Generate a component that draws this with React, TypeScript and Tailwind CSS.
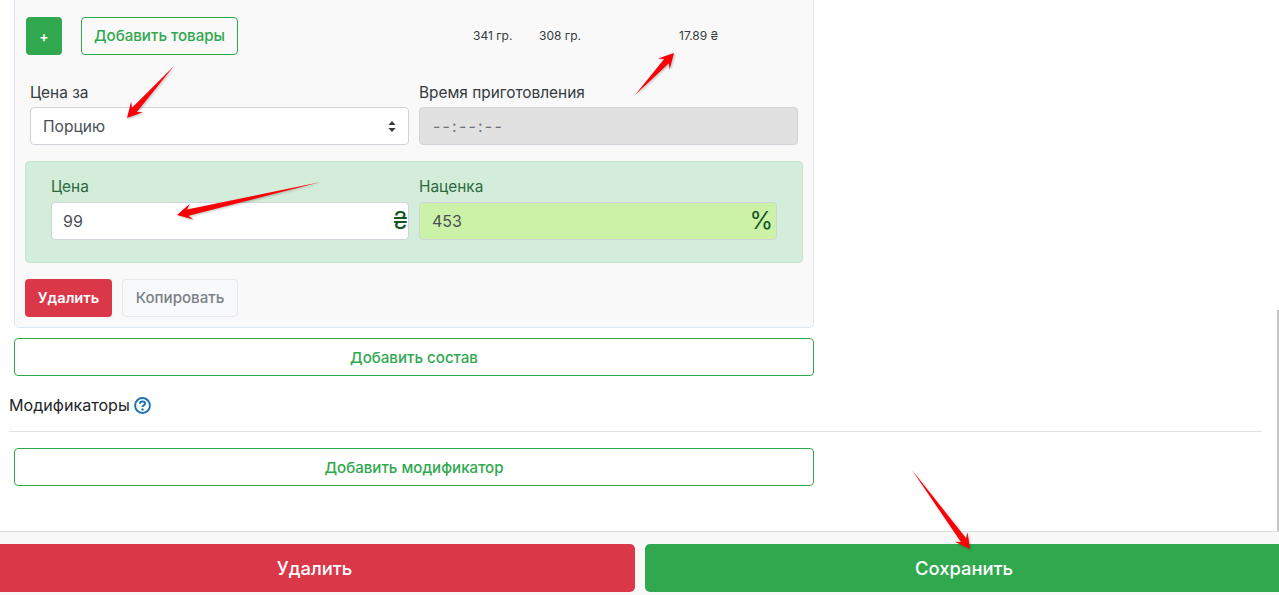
import React from "react";

function Arrow({ x1, y1, x2, y2 }: { x1: number; y1: number; x2: number; y2: number }) {
    // tapered annotation arrow drawn from tail (x1,y1) to tip (x2,y2)
    const len = Math.hypot(x2 - x1, y2 - y1);
    const ux = (x2 - x1) / len;
    const uy = (y2 - y1) / len;
    const nx = -uy;
    const ny = ux;
    const bx = x2 - ux * 15;
    const by = y2 - uy * 15;
    const nbx = x2 - ux * 11;
    const nby = y2 - uy * 11;
    const pts = [
        [x1, y1],
        [nbx + nx * 3.2, nby + ny * 3.2],
        [bx + nx * 8, by + ny * 8],
        [x2, y2],
        [bx - nx * 8, by - ny * 8],
        [nbx - nx * 3.2, nby - ny * 3.2],
    ]
        .map((p) => p.join(","))
        .join(" ");
    return <polygon points={pts} fill="#fb0007" />;
}

function Field({ label, children }: { label: string; children: React.ReactNode }) {
    return (
        <div className="w-[358px]">
            <div className="h-[24px] text-[15.4px] leading-[26px] mb-[4px] text-[#2b6a3c]">{label}</div>
            {children}
        </div>
    );
}

export default function App() {
    return (
        <div className="relative w-[1279px] h-[595px] overflow-hidden bg-white flex flex-col text-[#212529] font-['Inter',sans-serif]">
            <div className="flex-1 min-h-0 pl-[9px] pr-[17px]">
                <div className="ml-[5px] w-[800px] h-[328px] bg-[#f9f9f9] border border-t-0 border-[#dee6f2] rounded-b-[5px] pl-[10px] pr-[10px] flex flex-col">
                    <div className="flex items-center pt-[17px] pl-[1px]">
                        <button className="w-[36px] h-[38px] rounded-[4px] bg-[#30a84e] text-white text-[14px] font-semibold">+</button>
                        <button className="ml-[19px] w-[157px] h-[38px] rounded-[4px] border border-[#30a84e] text-[#30a84e] text-[15.1px] font-medium">Добавить товары</button>
                        <span className="ml-[235px] w-[66px] text-[12px] text-[#343a40]">341 гр.</span>
                        <span className="w-[140px] text-[12px] text-[#343a40]">308 гр.</span>
                        <span className="text-[12px] text-[#343a40]">17.89 ₴</span>
                    </div>
                    <div className="flex pl-[5px] mt-[25px] gap-[10px]">
                        <div className="w-[379px]">
                            <div className="h-[24px] text-[15.4px] leading-[26px] mb-[3px] text-[#343a40]">Цена за</div>
                            <div className="h-[38px] bg-white border border-[#ced4da] rounded-[4px] pl-[12px] pr-[12px] pt-[1px] flex items-center justify-between text-[15.6px] text-[#495057]">
                                <span>Порцию</span>
                                <svg width="8" height="11" viewBox="0 0 8 11"><path d="M4 0l3.6 4H.4zM4 11L.4 7h7.2z" fill="#343a40" /></svg>
                            </div>
                        </div>
                        <div className="w-[379px]">
                            <div className="h-[24px] text-[15.4px] leading-[26px] mb-[3px] text-[#343a40]">Время приготовления</div>
                            <div className="h-[38px] bg-[#e1e1e1] border border-[#ced4da] rounded-[4px] pl-[13px] flex items-center text-[16px] tracking-[2.2px] text-[#6c7278]">--:--:--</div>
                        </div>
                    </div>
                    <div className="mt-[16px] w-[778px] h-[102px] bg-[#d4edda] border border-[#c3e6cb] rounded-[4px] pl-[25px] pt-[12px] flex gap-[10px] text-[#155724]">
                        <Field label="Цена">
                            <div className="relative h-[38px] bg-white border border-[#ced4da] rounded-[4px] pl-[11px] flex items-center text-[16px] text-[#495057]">
                                99
                                <span className="absolute right-[0px] top-[2px] text-[24px] leading-[32px] text-[#155724]">₴</span>
                            </div>
                        </Field>
                        <Field label="Наценка">
                            <div className="relative h-[38px] bg-[#ccf2a8] border border-[#ced4da] rounded-[4px] pl-[12px] flex items-center text-[16px] text-[#495057]">
                                453
                                <span className="absolute right-[3px] top-[2px] text-[24px] leading-[32px] text-[#155724]">%</span>
                            </div>
                        </Field>
                    </div>
                    <div className="mt-[16px] flex gap-[10px]">
                        <button className="w-[87px] h-[38px] pt-[1px] rounded-[4px] bg-[#da3748] text-white text-[14.7px] font-semibold">Удалить</button>
                        <button className="w-[116px] h-[38px] pt-[1px] rounded-[4px] bg-[#f8f9fa] border border-[#e6e8eb] text-[#7b8188] text-[15.1px] font-medium">Копировать</button>
                    </div>
                </div>
                <button className="block ml-[5px] mt-[10px] w-[800px] h-[38px] pt-[2px] rounded-[4px] border border-[#30a84e] text-[#30a84e] text-[15.1px] font-medium">Добавить состав</button>
                <div className="mt-[17px] h-[24px] flex items-center gap-[4px] text-[16.1px]">
                    Модификаторы
                    <svg width="17" height="17" viewBox="0 0 16 16" fill="none">
                        <circle cx="8" cy="8" r="7" stroke="#1c74b4" strokeWidth="1.8" />
                        <path d="M5.6 6.4c0-1.4 1.1-2.2 2.4-2.2s2.4.8 2.4 2c0 1.7-2.4 1.6-2.4 3.2" stroke="#1c74b4" strokeWidth="1.9" />
                        <circle cx="8" cy="11.8" r="1.1" fill="#1c74b4" />
                    </svg>
                </div>
                <div className="mt-[14px] h-px bg-[#e3e3e3]" />
                <button className="block ml-[5px] mt-[16px] w-[800px] h-[38px] pt-[2px] rounded-[4px] border border-[#30a84e] text-[#30a84e] text-[15.1px] font-medium">Добавить модификатор</button>
            </div>
            <div className="h-[64px] shrink-0 bg-[#f8f8f8] border-t border-[#dcdcdc] pt-[12px] flex gap-[10px]">
                <button className="w-[635px] h-[48px] pr-[6px] pt-[1px] rounded-r-[5px] bg-[#da3748] text-white text-[18.4px] font-medium">Удалить</button>
                <button className="flex-1 h-[48px] pl-[4px] pt-[1px] rounded-l-[5px] bg-[#30a84e] text-white text-[18.4px] font-medium">Сохранить</button>
            </div>
            <div className="absolute right-0 top-[310px] h-[221px] w-[2px] bg-[#c4c4c4]" />
            <svg className="absolute inset-0 pointer-events-none drop-shadow-[1px_1px_1px_rgba(0,0,0,0.25)]" width="1279" height="595">
                <Arrow x1={174} y1={66} x2={127} y2={118} />
                <Arrow x1={635} y1={95} x2={674} y2={53} />
                <Arrow x1={321} y1={182} x2={177} y2={215} />
                <Arrow x1={912} y1={470} x2={970} y2={549} />
            </svg>
        </div>
    );
}
